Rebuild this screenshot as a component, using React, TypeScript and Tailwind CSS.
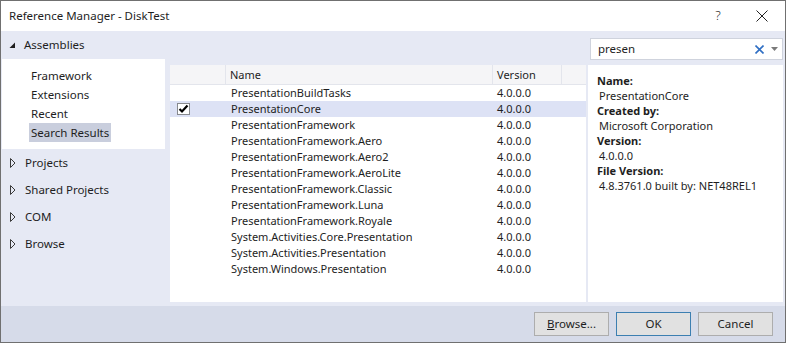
import React from 'react';

const ASSEMBLIES = [
  'PresentationBuildTasks',
  'PresentationCore',
  'PresentationFramework',
  'PresentationFramework.Aero',
  'PresentationFramework.Aero2',
  'PresentationFramework.AeroLite',
  'PresentationFramework.Classic',
  'PresentationFramework.Luna',
  'PresentationFramework.Royale',
  'System.Activities.Core.Presentation',
  'System.Activities.Presentation',
  'System.Windows.Presentation',
];

const SUB_ITEMS = ['Framework', 'Extensions', 'Recent', 'Search Results'];
const GROUPS = ['Projects', 'Shared Projects', 'COM', 'Browse'];

const DETAILS = [
  { label: 'Name:', value: 'PresentationCore' },
  { label: 'Created by:', value: 'Microsoft Corporation' },
  { label: 'Version:', value: '4.0.0.0' },
  { label: 'File Version:', value: '4.8.3761.0 built by: NET48REL1' },
];

function Expanded() {
  return (
    <svg width="7" height="7" viewBox="0 0 7 7" className="shrink-0">
      <path d="M6 0.5 L6 6 L0.5 6 Z" fill="#1e1e1e" />
    </svg>
  );
}

function Collapsed() {
  return (
    <svg width="6" height="10" viewBox="0 0 6 10" className="shrink-0">
      <path d="M0.5 0.5 L5 5 L0.5 9.5 Z" fill="none" stroke="#3a3a3a" strokeWidth="1" />
    </svg>
  );
}

function CheckBox() {
  return (
    <svg width="13" height="12" viewBox="0 0 13 12">
      <rect x="0.5" y="0.5" width="12" height="11" fill="#fff" stroke="#222" strokeDasharray="1 1" />
      <path d="M2.5 6 L5 8.5 L10.5 2.5" fill="none" stroke="#000" strokeWidth="2.2" />
    </svg>
  );
}

export default function App() {
  return (
    <div
      className="w-[786px] h-[343px] border border-[#707070] bg-[#e6e9f4] flex flex-col text-[11px] text-[#1e1e1e] overflow-hidden"
      style={{ fontFamily: '"Noto Sans", "Open Sans", sans-serif' }}
    >
      {/* title bar */}
      <div className="h-[30px] bg-white flex items-center shrink-0">
        <span className="pl-[8px] flex-1 text-[11.5px]">Reference Manager - DiskTest</span>
        <span className="w-[46px] text-center text-[13px] pl-[4px] font-light">?</span>
        <span className="w-[46px] flex justify-center">
          <svg width="12" height="12" viewBox="0 0 12 12">
            <path d="M0.5 0.5 L11.5 11.5 M11.5 0.5 L0.5 11.5" stroke="#222" strokeWidth="1" />
          </svg>
        </span>
      </div>

      {/* body */}
      <div className="flex flex-1 min-h-0">
        {/* left nav */}
        <div className="w-[164px] flex flex-col shrink-0 text-[11.5px]">
          <div className="h-[28px] flex items-center gap-[8px] pl-[8px]">
            <Expanded />
            <span>Assemblies</span>
          </div>
          <div className="bg-white ml-[1px] py-[7px]">
            {SUB_ITEMS.map((s) => (
              <div key={s} className="h-[19px] flex items-center pl-[27px]">
                <span className={`px-[2px] h-[19px] flex items-center ${s === 'Search Results' ? 'bg-[#c9cedd]' : ''}`}>{s}</span>
              </div>
            ))}
          </div>
          {GROUPS.map((g) => (
            <div key={g} className="h-[27px] flex items-center gap-[9px] pl-[9px]">
              <Collapsed />
              <span>{g}</span>
            </div>
          ))}
        </div>

        {/* right area */}
        <div className="flex-1 flex flex-col pl-[5px] pr-[2px]">
          <div className="h-[34px] flex items-center justify-end shrink-0 pt-[2px]">
            <div className="w-[193px] h-[22px] bg-white border border-[#cfd3dd] flex items-center text-[11.5px]">
              <span className="pl-[7px] flex-1">presen</span>
              <svg width="9" height="9" viewBox="0 0 9 9" className="mr-[7px]">
                <path d="M0.5 0.5 L8.5 8.5 M8.5 0.5 L0.5 8.5" stroke="#2f6fc4" strokeWidth="1.6" />
              </svg>
              <svg width="7" height="4" viewBox="0 0 7 4" className="mr-[4px]">
                <path d="M0 0 L7 0 L3.5 4 Z" fill="#7a7a7a" />
              </svg>
            </div>
          </div>

          <div className="flex h-[237px]">
            {/* list */}
            <div className="w-[416px] bg-white flex flex-col">
              <div className="h-[20px] flex bg-[#f5f5f7] border-b border-[#e3e5ec] text-[#1e1e1e]">
                <div className="w-[56px] border-r border-[#e3e5ec]" />
                <div className="w-[267px] border-r border-[#e3e5ec] pl-[4px] flex items-center pt-[1px]">Name</div>
                <div className="w-[69px] border-r border-[#e3e5ec] pl-[4px] flex items-center pt-[1px]">Version</div>
                <div className="flex-1" />
              </div>
              {ASSEMBLIES.map((a) => {
                const sel = a === 'PresentationCore';
                return (
                  <div key={a} className={`h-[16px] flex items-center ${sel ? 'bg-[#dde2f5]' : ''}`}>
                    <div className="w-[56px] pl-[7px] flex items-center">{sel && <CheckBox />}</div>
                    <div className="w-[267px] pl-[5px] pt-[1px]">{a}</div>
                    <div className="pl-[4px] pt-[1px]">4.0.0.0</div>
                  </div>
                );
              })}
            </div>

            {/* details */}
            <div className="flex-1 ml-[2px] bg-white pl-[9px] pt-[8px] leading-[15px]">
              {DETAILS.map((d) => (
                <div key={d.label}>
                  <div className="font-bold">{d.label}</div>
                  <div className="pl-[2px]">{d.value}</div>
                </div>
              ))}
            </div>
          </div>
        </div>
      </div>

      {/* footer */}
      <div className="h-[36px] mt-[4px] bg-[#d6dbe9] flex items-center justify-end gap-[7px] pr-[12px] shrink-0 text-[11.5px]">
        <button className="w-[75px] h-[24px] bg-[#e1e1e1] border border-[#adadad]">
          <u>B</u>rowse...
        </button>
        <button className="w-[75px] h-[24px] bg-[#e1e1e1] border border-[#3c7fb1]">OK</button>
        <button className="w-[75px] h-[24px] bg-[#e1e1e1] border border-[#adadad]">Cancel</button>
      </div>
    </div>
  );
}
